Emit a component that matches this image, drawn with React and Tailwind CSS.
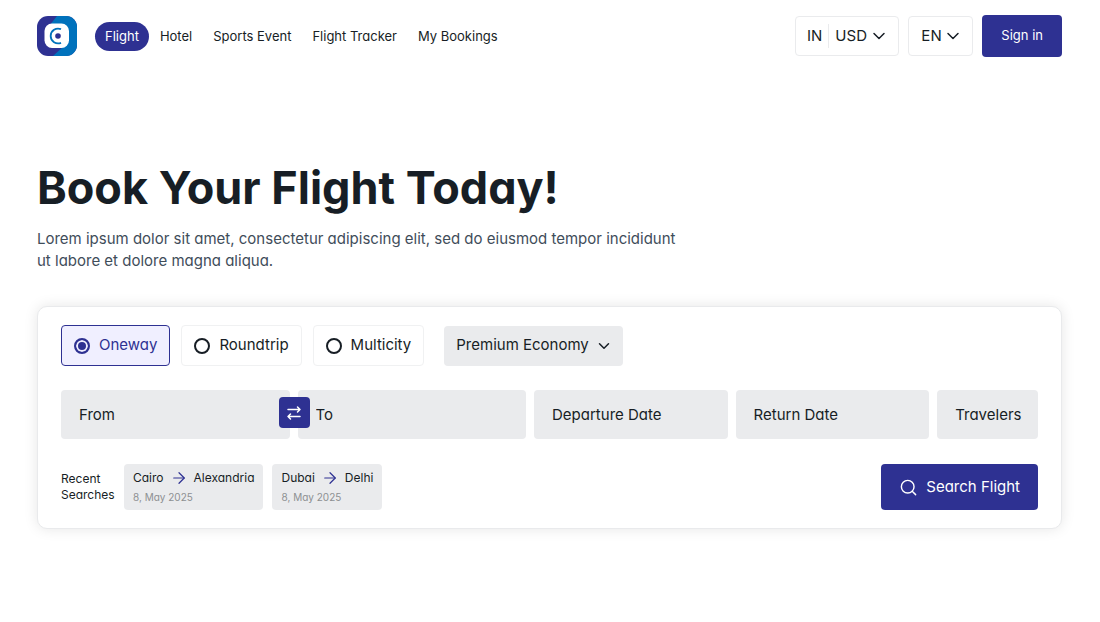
import React, { useState } from "react";
import { ArrowRight, ChevronDown, Search } from "lucide-react";

const navLinks = ["Flight", "Hotel", "Sports Event", "Flight Tracker", "My Bookings"];

const tripTypes = ["Oneway", "Roundtrip", "Multicity"];

const recentSearches = [
  { from: "Cairo", to: "Alexandria", date: "8, May 2025" },
  { from: "Dubai", to: "Delhi", date: "8, May 2025" },
];

function Logo() {
  return (
    <svg viewBox="0 0 40 40" className="h-10 w-10" aria-hidden="true">
      <defs>
        <clipPath id="logo-shape">
          <rect width="40" height="40" rx="11" />
        </clipPath>
      </defs>
      <g clipPath="url(#logo-shape)">
        <rect width="40" height="40" fill="#2e3192" />
        <path d="M20 0L12 10L28 29L16 40H40V0Z" fill="#0072bc" />
      </g>
      <rect x="7.5" y="7.5" width="24.5" height="24.5" rx="7.5" fill="#fff" />
      <path
        d="M24 13.2A7.4 7.4 0 1 0 24 26.8"
        fill="none"
        stroke="#0072bc"
        strokeWidth="1.8"
      />
      <circle cx="21" cy="20" r="2.8" fill="#2e3192" />
    </svg>
  );
}

function SwapIcon() {
  return (
    <svg
      viewBox="0 0 16 16"
      className="h-4 w-4"
      fill="none"
      stroke="currentColor"
      strokeWidth="1.5"
      strokeLinecap="round"
      strokeLinejoin="round"
      aria-hidden="true"
    >
      <path d="M2 4.5h12M11.5 2L14 4.5L11.5 7" />
      <path d="M14 11.5H2M4.5 9L2 11.5L4.5 14" />
    </svg>
  );
}

function Field({ label, children }) {
  return (
    <div className="relative">
      <input
        type="text"
        aria-label={label}
        placeholder={label}
        className="h-[49px] w-full rounded bg-[#eaebed] pr-2 pl-[18px] text-[15px] text-[#171e25] outline-none placeholder:text-[#171e25]"
      />
      {children}
    </div>
  );
}

function Header() {
  return (
    <header className="flex h-[42px] items-center justify-between">
      <div className="flex items-center gap-[18px]">
        <a href="#" aria-label="Home">
          <Logo />
        </a>
        <nav className="flex items-center gap-px">
          {navLinks.map((link, index) => (
            <a
              key={link}
              href="#"
              className={`rounded-full px-2.5 py-1 text-[13px] leading-[21px] ${
                index === 0 ? "bg-[#2e3192] text-white" : "text-[#171e25]"
              }`}
            >
              {link}
            </a>
          ))}
        </nav>
      </div>

      <div className="flex items-center gap-[9px] text-[15px]">
        <div className="flex h-10 items-center rounded border border-[#eaebed] pr-[9px] pl-[11px]">
          <span className="pr-1.5">IN</span>
          <div className="relative flex items-center border-l border-[#eaebed] pl-1.5">
            <select aria-label="Currency" className="h-6 appearance-none bg-transparent pr-[22px] outline-none">
              <option>USD</option>
            </select>
            <ChevronDown
              size={20}
              strokeWidth={1.8}
              className="pointer-events-none absolute right-0"
            />
          </div>
        </div>
        <div className="relative flex items-center">
          <select
            aria-label="Language"
            className="h-10 appearance-none rounded border border-[#eaebed] pr-[30px] pl-3 outline-none"
          >
            <option>EN</option>
          </select>
          <ChevronDown
            size={20}
            strokeWidth={1.8}
            className="pointer-events-none absolute right-2.5"
          />
        </div>
        <button className="h-[42px] rounded bg-[#2e3192] px-[19px] text-[13px] text-white">
          Sign in
        </button>
      </div>
    </header>
  );
}

function SearchCard() {
  const [trip, setTrip] = useState("Oneway");

  return (
    <form
      onSubmit={(e) => e.preventDefault()}
      className="mt-[34px] rounded-[10px] border border-[#e9eaec] bg-white px-[23px] py-[18px] shadow-[0_0_14px_rgba(0,0,0,0.1)]"
    >
      <div className="flex items-center">
        <div className="flex gap-[11px]">
          {tripTypes.map((type) => (
            <label
              key={type}
              className={`flex h-[41px] items-center gap-[9px] rounded border px-3 text-[15px] ${
                trip === type
                  ? "border-[#2e3192] bg-[#f0efff] text-[#2e3192]"
                  : "border-[#f0f1f2] text-[#171e25]"
              }`}
            >
              <input
                type="radio"
                name="trip"
                checked={trip === type}
                onChange={() => setTrip(type)}
                className="h-4 w-4 appearance-none rounded-full border-2 border-current checked:bg-current checked:shadow-[inset_0_0_0_2px_#f0efff]"
              />
              {type}
            </label>
          ))}
        </div>
        <div className="relative ml-5 flex items-center">
          <select
            aria-label="Cabin class"
            className="h-10 appearance-none rounded bg-[#eaebed] pr-[34px] pl-3 text-[15px] outline-none"
          >
            <option>Premium Economy</option>
          </select>
          <ChevronDown size={18} className="pointer-events-none absolute right-2.5" />
        </div>
      </div>

      <div className="mt-6 grid grid-cols-[229fr_229fr_194fr_194fr_101fr] gap-2">
        <Field label="From">
          <button
            type="button"
            aria-label="Swap"
            className="absolute top-[7px] -right-5 z-10 flex h-[31px] w-[31px] items-center justify-center rounded bg-[#2e3192] text-white"
          >
            <SwapIcon />
          </button>
        </Field>
        <Field label="To" />
        <Field label="Departure Date" />
        <Field label="Return Date" />
        <Field label="Travelers" />
      </div>

      <div className="mt-[25px] flex items-center justify-between">
        <div className="flex items-center gap-[9px] text-xs">
          <p className="w-[54px] leading-4">Recent Searches</p>
          {recentSearches.map(({ from, to, date }) => (
            <button
              key={to}
              type="button"
              className="flex h-[46px] flex-col items-start justify-center gap-0.5 rounded bg-[#eaebed] px-[9px]"
            >
              <span className="flex items-center gap-1.5 leading-4">
                {from}
                <ArrowRight size={18} strokeWidth={1.6} className="text-[#2e3192]" />
                {to}
              </span>
              <span className="text-[10px] leading-4 text-[#8d9092]">{date}</span>
            </button>
          ))}
        </div>
        <button className="flex h-[46px] items-center gap-2 rounded bg-[#2e3192] px-[18px] text-[15px] text-white">
          <Search size={19} strokeWidth={1.8} />
          Search Flight
        </button>
      </div>
    </form>
  );
}

export default function App() {
  return (
    <div className="min-h-screen bg-white py-[15px] pr-[38px] pl-[37px] font-['Inter',sans-serif] text-[#171e25] [font-feature-settings:'cv11']">
      <Header />
      <main className="pt-[102px]">
        <h1 className="text-[45px] leading-[58px] font-bold">Book Your Flight Today!</h1>
        <p className="mt-[11px] max-w-[640px] text-[15px] leading-[22px] text-[#3f4d5a]">
          Lorem ipsum dolor sit amet, consectetur adipiscing elit, sed do eiusmod tempor
          incididunt ut labore et dolore magna aliqua.
        </p>
        <SearchCard />
      </main>
    </div>
  );
}
